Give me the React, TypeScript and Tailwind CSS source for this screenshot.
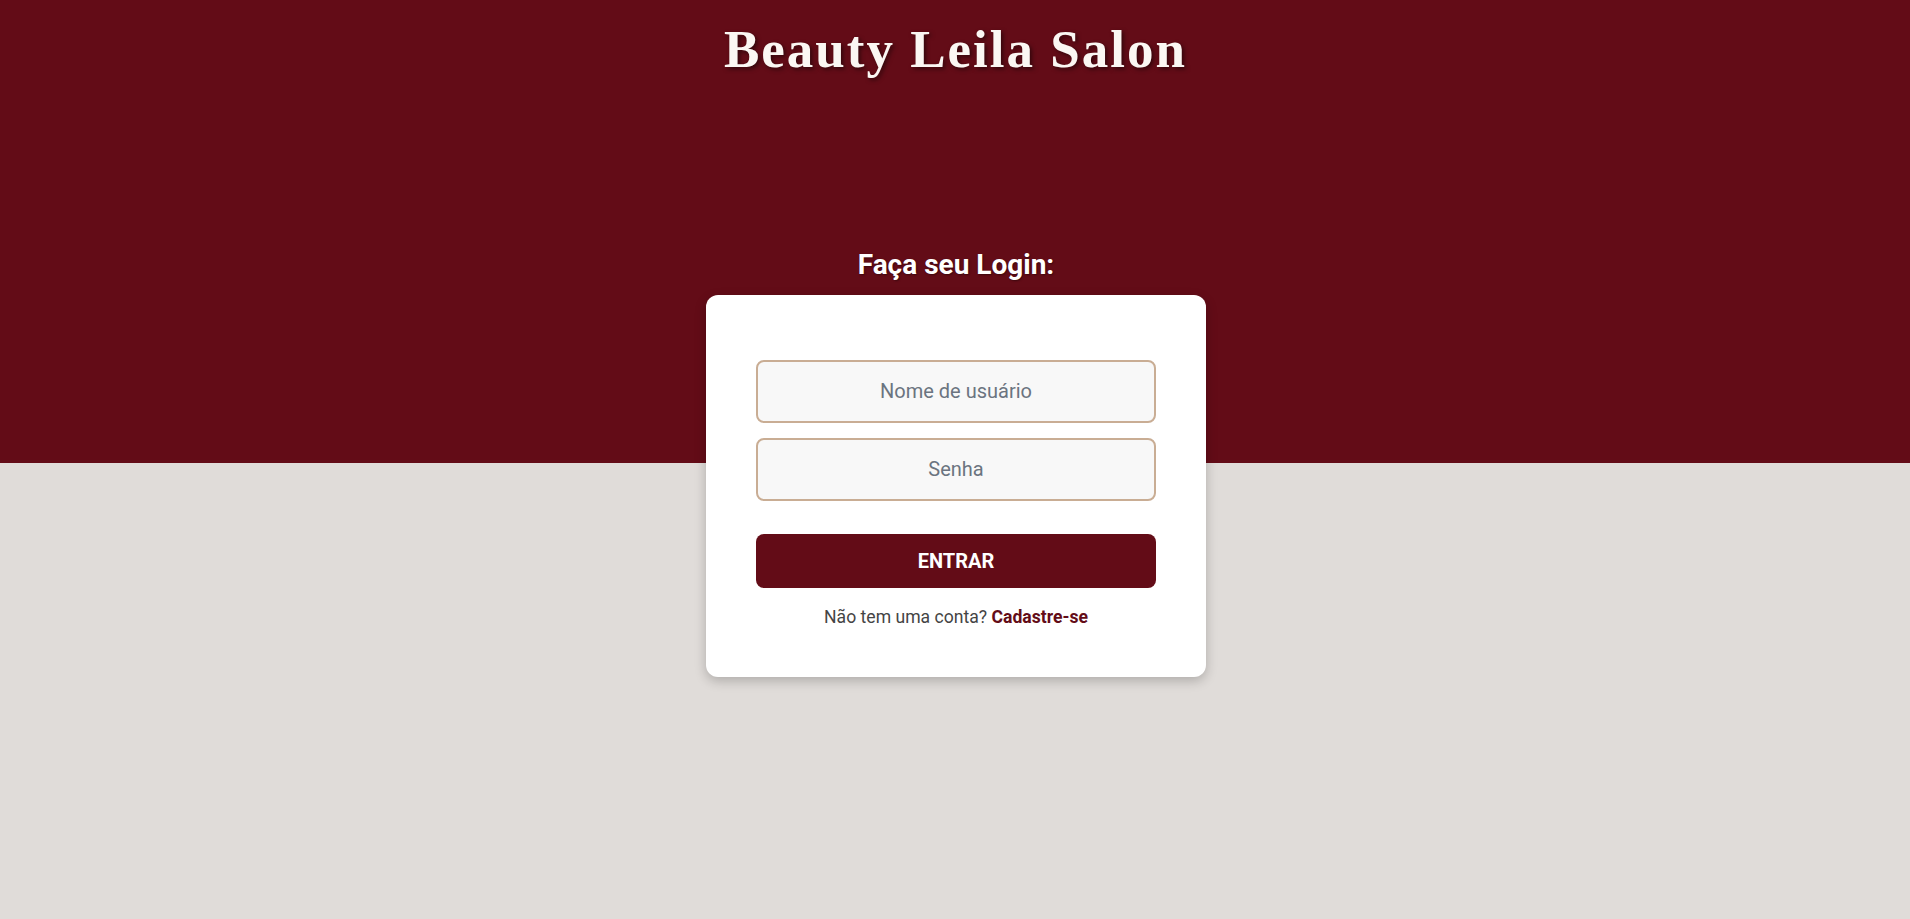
import React from "react";

export default function App() {
  return (
    <div
      className="min-h-screen w-full flex flex-col items-center bg-[linear-gradient(to_bottom,#630c17_463px,#e0dcd9_463px)]"
      style={{ fontFamily: "Roboto, 'Liberation Sans', sans-serif" }}
    >
      <h1
        className="pt-[23px] ml-[1px] text-[53px] leading-[53px] font-bold tracking-[2px] text-[#fbf7f3] [text-shadow:2px_2px_4px_rgba(0,0,0,0.5)]"
        style={{ fontFamily: "'Liberation Serif', 'Times New Roman', serif" }}
      >
        Beauty Leila Salon
      </h1>

      <h2 className="mt-[172px] ml-[2px] text-[28px] leading-[33.6px] font-bold text-white [text-shadow:1px_1px_2px_rgba(0,0,0,0.4)]">
        Faça seu Login:
      </h2>

      <div className="mt-[13px] ml-[2px] w-[500px] bg-white rounded-[12px] shadow-[0_4px_12px_rgba(0,0,0,0.22)] pt-[65px] px-[50px] pb-[46px] flex flex-col">
        <div className="flex flex-col gap-[15px]">
          <input
            type="text"
            placeholder="Nome de usuário"
            className="h-[63px] w-full rounded-[8px] border-2 border-[#c9ad94] bg-[#f8f8f8] text-center text-[20px] text-[#333] placeholder:text-[#6b7480] outline-none"
          />
          <input
            type="password"
            placeholder="Senha"
            className="h-[63px] w-full rounded-[8px] border-2 border-[#c9ad94] bg-[#f8f8f8] text-center text-[20px] text-[#333] placeholder:text-[#6b7480] outline-none"
          />
        </div>
        <button className="mt-[33px] h-[54px] w-full rounded-[8px] bg-[#630c17] text-white text-[20px] font-bold">
          ENTRAR
        </button>
        <p className="mt-[16px] text-center text-[17.6px] leading-[27px] text-[#444]">
          Não tem uma conta?{" "}
          <a href="#" className="font-bold text-[#630c17]">
            Cadastre-se
          </a>
        </p>
      </div>
    </div>
  );
}
